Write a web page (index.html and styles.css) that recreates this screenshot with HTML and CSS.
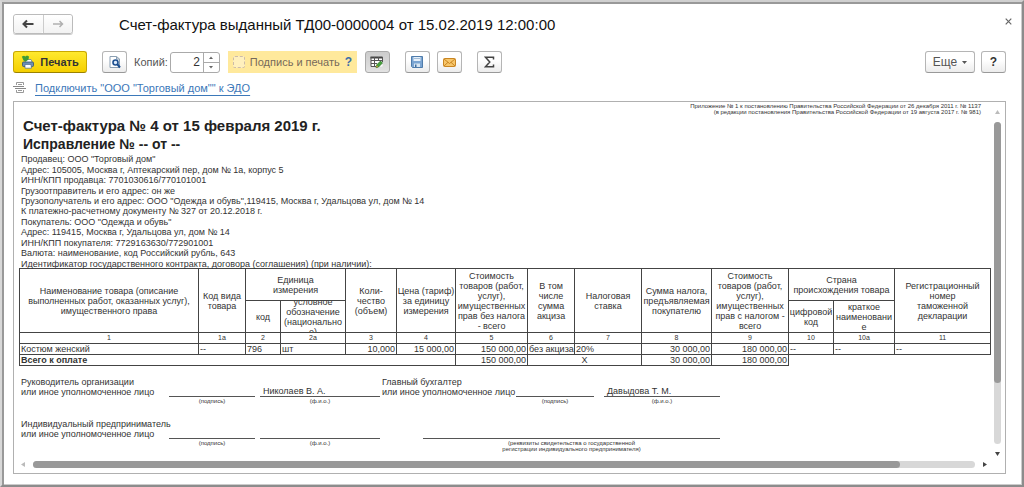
FILE: index.html
```html
<!DOCTYPE html>
<html lang="ru">
<head>
<meta charset="utf-8">
<meta name="viewport" content="width=device-width, initial-scale=1">
<title>Счет-фактура выданный</title>
<link rel="stylesheet" href="styles.css">
</head>
<body>
<main class="window">
  <header class="titlebar">
    <div class="nav">
      <button class="nav-btn" aria-label="Назад"><svg width="12" height="10" viewBox="0 0 12 10"><path d="M5 1.500 1.500 5 5 8.500M1.500 5H11.500" fill="none" stroke="#444" stroke-width="2"/></svg></button>
      <button class="nav-btn" aria-label="Вперед"><svg width="12" height="10" viewBox="0 0 12 10"><path d="M7.500 2 10.500 5 7.500 8M10 5H1" fill="none" stroke="#b0b0b0" stroke-width="1.500"/></svg></button>
    </div>
    <h1 class="title">Счет-фактура выданный ТД00-0000004 от 15.02.2019 12:00:00</h1>
    <button class="close" aria-label="Закрыть"><svg width="7" height="7" viewBox="0 0 7 7"><path d="M.7.7 6.300 6.300M6.300.7.7 6.300" stroke="#666" stroke-width="1.200"/></svg></button>
  </header>

  <div class="toolbar">
    <button class="btn print">
      <svg width="13" height="14" viewBox="0 0 13 14"><path d="M4 4.500h6L11.500 8H4.500Z" fill="#fff" stroke="#57718c" stroke-width=".7"/><path d="M.8 1.500 3 .8 4.300 1.500 6 .6 8 1.500 7.500 4.500 5 6.500 2.500 5.500Z" fill="#3d9b35"/><rect x="1.500" y="7" width="11" height="4.500" rx="1" fill="#6c8fb4" stroke="#35536f" stroke-width=".8"/><path d="M4 9.500h6l.5 3.700H4Z" fill="#fff" stroke="#4e6c8b" stroke-width=".7"/></svg>
      Печать
    </button>
    <button class="btn icon-btn preview" aria-label="Просмотр"><svg width="12" height="14" viewBox="0 0 12 14"><path d="M1 1.500h6.500L10.500 4v8.500H1Z" fill="#fff" stroke="#8b9fb2"/><path d="M7.500 1.500V4h3" fill="none" stroke="#8b9fb2"/><circle cx="6.500" cy="7.500" r="2.500" fill="#dceafa" stroke="#1d4f8f" stroke-width="1.600"/><path d="m8.500 9.500 2.500 3" stroke="#1d4f8f" stroke-width="2"/></svg></button>
    <label class="copies-label" for="copies">Копий:</label>
    <div class="copies">
      <input id="copies" class="copies-input" type="text" value="2">
      <div class="spin">
        <button class="spin-btn" aria-label="Больше"><svg width="4" height="3" viewBox="0 0 4 3"><path d="M0 3 2 .5 4 3Z" fill="#666"/></svg></button>
        <button class="spin-btn" aria-label="Меньше"><svg width="4" height="3" viewBox="0 0 4 3"><path d="M0 0 2 2.500 4 0Z" fill="#666"/></svg></button>
      </div>
    </div>
    <div class="stamp">
      <input id="stamp" class="check" type="checkbox">
      <label for="stamp">Подпись и печать</label>
      <a class="help" href="#">?</a>
    </div>
    <button class="btn icon-btn pressed" aria-label="Редактирование"><svg width="14" height="13" viewBox="0 0 14 13"><path d="M1 1.500h11.500v9H1Z" fill="#fff"/><path d="M.5 1.500h12" stroke="#444" stroke-width="2"/><path d="M1 1v9.500h5M1 4.500h11.500M1 7.500h6M4.500 1v9.500M8.500 1v4M12.500 1v5" fill="none" stroke="#555"/><path d="m6.500 9 4-4 2 2-4 4-2.500.7Z" fill="#45a13a" stroke="#256d20" stroke-width=".7"/><path d="m6 11.500.5-2.300 1.700 1.800Z" fill="#d39a47"/></svg></button>
    <button class="btn icon-btn save" aria-label="Сохранить"><svg width="12" height="12" viewBox="0 0 12 12"><path d="M.5.5h11v11h-10l-1-1Z" fill="#7ba5d2" stroke="#4f7cab"/><path d="M2.500 1h7v4h-7Z" fill="#e8f1fa"/><path d="M3 2.500h6" stroke="#a4bdd6"/><path d="M3 7.500h6V11H3Z" fill="#d9e6f2"/><path d="M4 8.500h1.500V11H4Z" fill="#416f9f"/></svg></button>
    <button class="btn icon-btn" aria-label="Отправить"><svg width="13" height="9" viewBox="0 0 13 9"><rect x=".5" y=".5" width="12" height="8" rx="1" fill="#f7c66a" stroke="#c98522"/><path d="m1 1 5.500 4.500L12 1M1 8l4-3.700M12 8 8 4.300" fill="none" stroke="#c98522"/></svg></button>
    <button class="btn icon-btn sum" aria-label="Сумма"><svg width="11" height="12" viewBox="0 0 11 12"><path d="M9.500 3.500V1.200H1.500L5.800 6 1.500 10.800h8V8.500" fill="none" stroke="#444" stroke-width="1.500"/></svg></button>
    <button class="btn more">Еще <svg width="5" height="3" viewBox="0 0 5 3"><path d="M0 0h5L2.500 3Z" fill="#555"/></svg></button>
    <button class="btn icon-btn question">?</button>
  </div>

  <div class="edo">
    <svg width="13" height="11" viewBox="0 0 13 11"><path d="M3.500 3V.5h7V3M3.500 8v2.500h7V8M5 2.500h4M5 8.500h4" fill="none" stroke="#999"/><path d="M0 4.500h11M2 6.500h11" stroke="#888"/></svg>
    <a class="edo-link" href="#">Подключить "ООО "Торговый дом"" к ЭДО</a>
  </div>

  <section class="sheet">
    <div class="page">
      <p class="appendix">Приложение № 1 к постановлению Правительства Российской Федерации от 26 декабря 2011 г. № 1137<br>(в редакции постановления Правительства Российской Федерации от 19 августа 2017 г. № 981)</p>
      <h2 class="doc-title">Счет-фактура № 4 от 15 февраля 2019 г.</h2>
      <h3 class="doc-fix">Исправление № -- от --</h3>
      <div class="details">
        <div>Продавец: ООО "Торговый дом"</div>
        <div>Адрес: 105005, Москва г, Аптекарский пер, дом № 1а, корпус 5</div>
        <div>ИНН/КПП продавца: 7701030616/770101001</div>
        <div>Грузоотправитель и его адрес: он же</div>
        <div>Грузополучатель и его адрес: ООО "Одежда и обувь",119415, Москва г, Удальцова ул, дом № 14</div>
        <div>К платежно-расчетному документу № 327 от 20.12.2018 г.</div>
        <div>Покупатель: ООО "Одежда и обувь"</div>
        <div>Адрес: 119415, Москва г, Удальцова ул, дом № 14</div>
        <div>ИНН/КПП покупателя: 7729163630/772901001</div>
        <div>Валюта: наименование, код Российский рубль, 643</div>
        <div>Идентификатор государственного контракта, договора (соглашения) (при наличии):</div>
      </div>

      <table class="invoice">
        <colgroup><col class="c1"><col class="c1a"><col class="c2"><col class="c2a"><col class="c3"><col class="c4"><col class="c5"><col class="c6"><col class="c7"><col class="c8"><col class="c9"><col class="c10"><col class="c10a"><col class="c11"></colgroup>
        <thead>
          <tr class="head">
            <th rowspan="2">Наименование товара (описание<br>выполненных работ, оказанных услуг),<br>имущественного права</th>
            <th rowspan="2">Код вида<br>товара</th>
            <th colspan="2">Единица<br>измерения</th>
            <th rowspan="2">Коли-<br>чество<br>(объем)</th>
            <th rowspan="2">Цена (тариф)<br>за единицу<br>измерения</th>
            <th rowspan="2">Стоимость<br>товаров (работ,<br>услуг),<br>имущественных<br>прав без налога<br>- всего</th>
            <th rowspan="2">В том<br>числе<br>сумма<br>акциза</th>
            <th rowspan="2">Налоговая<br>ставка</th>
            <th rowspan="2">Сумма налога,<br>предъявляемая<br>покупателю</th>
            <th rowspan="2">Стоимость<br>товаров (работ,<br>услуг),<br>имущественных<br>прав с налогом -<br>всего</th>
            <th colspan="2">Страна<br>происхождения товара</th>
            <th rowspan="2">Регистрационный<br>номер<br>таможенной<br>декларации</th>
          </tr>
          <tr class="head">
            <th>код</th>
            <th><div class="clip">условное<br>обозначение<br>(национально<br>е)</div></th>
            <th>цифровой<br>код</th>
            <th>краткое<br>наименовани<br>е</th>
          </tr>
          <tr class="nums"><th>1</th><th>1а</th><th>2</th><th>2а</th><th>3</th><th>4</th><th>5</th><th>6</th><th>7</th><th>8</th><th>9</th><th>10</th><th>10а</th><th>11</th></tr>
        </thead>
        <tbody>
          <tr><td>Костюм женский</td><td>--</td><td>796</td><td>шт</td><td class="num">10,000</td><td class="num">15 000,00</td><td class="num">150 000,00</td><td>без акциза</td><td>20%</td><td class="num">30 000,00</td><td class="num">180 000,00</td><td>--</td><td>--</td><td>--</td></tr>
          <tr><td class="total" colspan="6">Всего к оплате</td><td class="num">150 000,00</td><td class="mid" colspan="2">X</td><td class="num">30 000,00</td><td class="num">180 000,00</td><td class="none" colspan="3"></td></tr>
        </tbody>
      </table>

      <div class="signs">
        <div class="who">Руководитель организации<br>или иное уполномоченное лицо</div>
        <div class="line"></div>
        <div class="line name">Николаев В. А.</div>
        <div class="who chief">Главный бухгалтер<br>или иное уполномоченное лицо</div>
        <div class="line chief-sign"></div>
        <div class="line chief-name">Давыдова Т. М.</div>
        <div class="cap cap-sign">(подпись)</div>
        <div class="cap cap-name">(ф.и.о.)</div>
        <div class="cap cap-chief-sign">(подпись)</div>
        <div class="cap cap-chief-name">(ф.и.о.)</div>
      </div>
      <div class="signs">
        <div class="who">Индивидуальный предприниматель<br>или иное уполномоченное лицо</div>
        <div class="line"></div>
        <div class="line name"></div>
        <div class="line wide"></div>
        <div class="cap cap-sign">(подпись)</div>
        <div class="cap cap-name">(ф.и.о.)</div>
        <div class="cap cap-wide">(реквизиты свидетельства о государственной<br>регистрации индивидуального предпринимателя)</div>
      </div>
    </div>
    <div class="vscroll">
      <svg width="5" height="4" viewBox="0 0 5 4"><path d="M0 4 2.500 0 5 4Z" fill="#bbb"/></svg>
      <div class="vtrack"><div class="vthumb"></div></div>
      <svg width="5" height="4" viewBox="0 0 5 4"><path d="M0 0h5L2.500 4Z" fill="#444"/></svg>
    </div>
    <div class="hscroll">
      <svg width="4" height="5" viewBox="0 0 4 5"><path d="M4 0v5L0 2.500Z" fill="#bbb"/></svg>
      <div class="htrack"><div class="hthumb"></div></div>
      <svg width="4" height="5" viewBox="0 0 4 5"><path d="M0 0v5L4 2.500Z" fill="#444"/></svg>
    </div>
  </section>
</main>
</body>
</html>
```
FILE: styles.css
```css
* { box-sizing: border-box; }
body {
  margin: 0;
  background: #fff;
  color: #333;
  font-family: "Liberation Sans", Arial, sans-serif;
  font-size: 11px;
}
button, input { font: inherit; color: inherit; margin: 0; padding: 0; }
svg { display: block; flex: none; }

.window {
  display: flex;
  flex-direction: column;
  min-height: 100vh;
  padding: 9px 14px 11px 8px;
  border: 2px solid;
  border-color: #d0d0d0 #8c8c8c #8c8c8c #d8d8d8;
  box-shadow: inset 3px 3px 0 -1px #999, inset -1px -1px 0 #ccc;
}

.titlebar { display: flex; align-items: center; height: 26px; padding-left: 3px; }
.nav { display: flex; width: 60px; height: 20px; border: 1px solid #bbb; border-radius: 3px; box-shadow: 0 1px 0 #ccc; }
.nav-btn { display: flex; flex: 1; align-items: center; justify-content: center; border: 0; background: linear-gradient(#fff, #f2f2f2); border-radius: 3px; }
.nav-btn + .nav-btn { border-left: 1px solid #ccc; border-radius: 0 3px 3px 0; }
.title { margin: 0 0 0 46px; font-size: 15px; font-weight: 400; color: #111; white-space: nowrap; }
.close { display: flex; margin: 0 -4px 6px auto; border: 0; background: none; }

.toolbar { display: flex; align-items: center; margin-top: 14px; padding: 0 2px 0 3px; height: 22px; }
.btn {
  display: flex;
  align-items: center;
  justify-content: center;
  height: 22px;
  border: 1px solid #b5b5b5;
  border-bottom-color: #999;
  border-radius: 3px;
  background: linear-gradient(#fff 40%, #ececec);
}
.icon-btn { width: 25px; }
.print { width: 74px; gap: 6px; border-color: #c9a800; border-bottom-color: #9b8200; background: linear-gradient(#ffe92e, #f5cf00); color: #333; font-weight: 700; }
.preview { margin-left: 15px; }
.copies-label { margin: 0 2px 0 7px; color: #555; }
.copies { display: flex; width: 50px; height: 21px; border: 1px solid #aaa; border-radius: 3px; }
.copies-input { width: 32px; padding-right: 3px; border: 0; background: none; text-align: right; outline: 0; font-size: 12px; }
.spin { display: flex; flex: 1; flex-direction: column; border-left: 1px solid #aaa; }
.spin-btn { display: flex; flex: 1; align-items: center; justify-content: center; border: 0; background: none; }
.spin-btn + .spin-btn { border-top: 1px solid #aaa; }
.stamp { display: flex; align-items: center; width: 129px; height: 22px; margin: 0 8px; padding-left: 5px; background: #ffe99c; color: #776a5a; white-space: nowrap; }
.check { width: 12px; height: 12px; margin-right: 5px; appearance: none; border: 1px dashed #cba; border-radius: 2px; background: #fff0bd; }
.help { margin-left: 5px; color: #3b6da8; font-size: 12px; font-weight: 700; text-decoration: none; }
.pressed { background: linear-gradient(#ccc, #e2e2e2); border-color: #aaa; }
.save { margin: 0 7px 0 15px; }
.sum { margin-left: 15px; }
.more { width: 50px; margin-left: auto; gap: 5px; color: #555; font-size: 12px; }
.question { margin-left: 6px; font-size: 12px; font-weight: 700; }

.edo { display: flex; align-items: center; gap: 9px; height: 17px; margin-top: 6px; padding-left: 3px; }
.edo-link { color: #3c78b9; text-underline-offset: 3px; }

.sheet {
  display: grid;
  flex: 1;
  grid-template-columns: 1fr 15px;
  grid-template-rows: 1fr 17px;
  margin: 5px 2px 0 3px;
  border: 1px solid #b0b0b0;
}
.page { min-width: 0; padding: 1px 2px 0 5px; font-size: 9px; line-height: 10px; }
.appendix { margin: 0 7px 0 0; font-size: 6px; line-height: 6px; text-align: right; }
.doc-title, .doc-fix { margin: 0 0 0 4px; line-height: 19px; color: #222; }
.doc-title { margin-top: 1px; font-size: 15px; }
.doc-fix { font-size: 14px; }
.details { display: grid; grid-auto-rows: 1fr; align-items: center; min-height: 115px; padding-left: 2px; }

.invoice { width: 100%; margin-top: -1px; border-collapse: collapse; table-layout: fixed; }
.invoice th, .invoice td { border: 1px solid #444; padding: 0 1px; font-weight: 400; text-align: left; vertical-align: middle; white-space: nowrap; }
.invoice th { padding: 0; text-align: center; }
.invoice .head { height: 32px; }
.invoice .nums th { font-size: 7px; }
.invoice .num { text-align: right; }
.invoice .mid { text-align: center; }
.invoice .total { font-weight: 700; }
.invoice .none { border: 0; }
.clip { display: grid; align-content: center; height: 31px; overflow: hidden; }
.c1 { width: 179px; } .c1a { width: 47px; } .c2 { width: 35px; } .c2a { width: 65px; }
.c3 { width: 51px; } .c4 { width: 59px; } .c5 { width: 72px; } .c6 { width: 47px; }
.c7 { width: 67px; } .c8 { width: 70px; } .c9 { width: 77px; } .c10 { width: 45px; }
.c10a { width: 61px; } .c11 { width: 96px; }

.signs {
  display: grid;
  grid-template-columns: 150px 86px 5px 120px 2px 134px 78px 10px 116px 1fr;
  align-content: start;
  margin-top: 11px;
  min-height: 31px;
}
.who { grid-column: 1; grid-row: 1; padding-left: 2px; white-space: nowrap; }
.line { grid-column: 2; grid-row: 1; display: flex; align-items: flex-end; border-bottom: 1px solid #555; padding-left: 3px; line-height: 9px; }
.name { grid-column: 4; }
.chief { grid-column: 6; padding-left: 0; }
.chief-sign { grid-column: 7; }
.chief-name { grid-column: 9; }
.wide { grid-column: 6 / 10; margin-left: 41px; }
.cap { grid-row: 2; padding-top: 1px; font-size: 6px; line-height: 6px; text-align: center; }
.cap-sign { grid-column: 2; }
.cap-name { grid-column: 4; }
.cap-chief-sign { grid-column: 7; }
.cap-chief-name { grid-column: 9; }
.cap-wide { grid-column: 6 / 10; margin-left: 41px; }

.vscroll { display: flex; flex-direction: column; align-items: center; gap: 8px; padding: 8px 0 0; }
.vtrack { flex: 1; width: 7px; border-radius: 4px; background: #d8d8d8; }
.vthumb { height: 81%; border-radius: 4px; background: #999; }
.hscroll { display: flex; align-items: center; gap: 8px; padding: 0 3px 0 7px; }
.htrack { flex: 1; height: 7px; border-radius: 4px; background: #d8d8d8; }
.hthumb { width: 92%; height: 7px; border-radius: 4px; background: #999; }
```
